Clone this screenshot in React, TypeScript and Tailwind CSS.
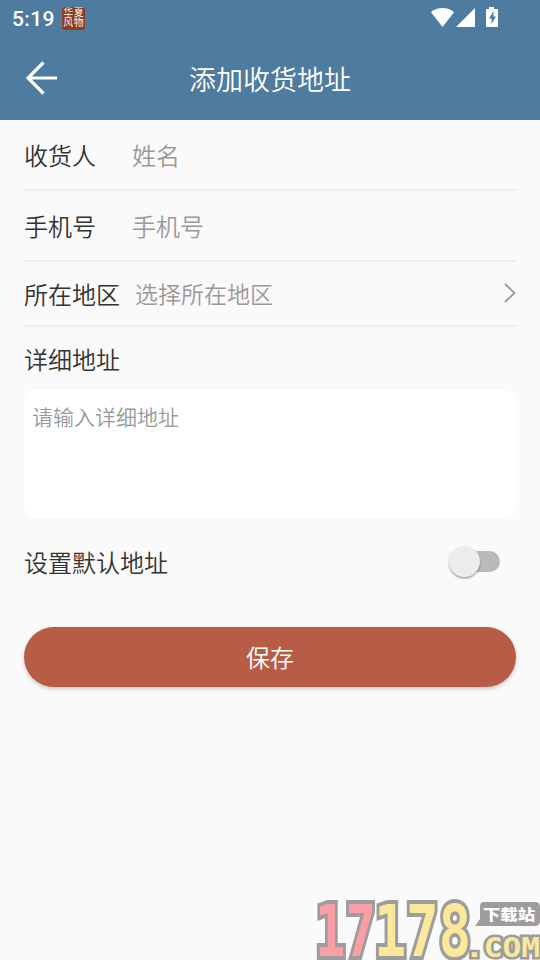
import React from 'react';

const FONT = "font-['Roboto','Noto_Sans_CJK_SC',sans-serif]";

function StatusBar() {
  return (
    <div className="flex h-9 items-center pl-3 pr-[42px]">
      <span className="mt-[2px] text-[21px] leading-none font-medium tracking-[0.4px]">5:19</span>
      <div className="ml-[7px] grid h-[23px] w-[23px] grid-cols-2 place-content-center place-items-center rounded-[3px] bg-[#8e3c1e] px-px text-[10px] leading-[10px]">
        <span>华</span>
        <span>夏</span>
        <span>风</span>
        <span>物</span>
      </div>
      <svg className="mb-[2px] ml-auto" width="67" height="22" viewBox="0 0 67 22" fill="#fff">
        <path d="M0 6.200C3.200 3.200 7.200 2 11.500 2S19.800 3.200 23 6.200L11.500 21Z" />
        <path d="M44 2V21H25Z" />
        <path
          fillRule="evenodd"
          d="M58 1h5v2h3q1 0 1 1V20q0 1-1 1H56q-1 0-1-1V4q0-1 1-1h2ZM62.500 5 58 12.500h2.500V18l4.500-7.500h-2.500Z"
        />
      </svg>
    </div>
  );
}

function Header() {
  return (
    <header className="h-[120px] bg-[#4e7ba0] text-white">
      <StatusBar />
      <div className="grid h-[84px] grid-cols-[60px_1fr_60px] items-center">
        <svg className="ml-[26px]" width="32" height="34" viewBox="0 0 32 34" fill="none" stroke="#fff" strokeWidth="3.200">
          <path d="M17.500 1.500 2 17l15.500 15.500M1.500 17H31" />
        </svg>
        <h1 className="pt-[5px] text-center text-[27px] leading-9 font-[350]">添加收货地址</h1>
      </div>
    </header>
  );
}

type FieldProps = {
  label: string;
  placeholder: string;
};

function Field({ label, placeholder }: FieldProps) {
  return (
    <div className="flex h-[71px] items-center border-b-2 border-[#efefef] pt-[5px]">
      <span className="w-[108px] text-2xl">{label}</span>
      <span className="text-2xl text-[#999]">{placeholder}</span>
    </div>
  );
}

function Watermark() {
  return (
    <svg
      className="absolute bottom-0 right-0 font-['DejaVu_Sans_Mono',monospace] font-bold"
      width="228"
      height="64"
      viewBox="312 896 228 64"
      stroke="#9d9d9d"
      paintOrder="stroke"
    >
      <g fontSize="72" strokeWidth="8">
        <text x="315" y="956" fill="#fc9ea6" textLength="61" lengthAdjust="spacingAndGlyphs">
          17
        </text>
        <text x="374" y="956" fill="#fbe89b" textLength="97" lengthAdjust="spacingAndGlyphs">
          178
        </text>
      </g>
      <text
        x="465"
        y="957"
        fontSize="27"
        fill="#fbe89b"
        strokeWidth="5"
        textLength="75"
        lengthAdjust="spacingAndGlyphs"
      >
        .COM
      </text>
      <path d="M484 902h51q5 0 5 5v14q0 5-5 5h-60l5-7v-12q0-5 4-5Z" fill="#9d9d9d" stroke="none" />
      <text
        className="font-['Noto_Sans_CJK_SC',sans-serif] font-black"
        x="483"
        y="920"
        fontSize="15"
        fill="#fff"
        stroke="none"
        textLength="52"
        lengthAdjust="spacingAndGlyphs"
      >
        下载站
      </text>
    </svg>
  );
}

export default function App() {
  return (
    <div className={`relative h-[960px] w-[540px] overflow-hidden bg-[#fafafa] font-[350] text-[#333] ${FONT}`}>
      <Header />

      <main className="px-6">
        <Field label="收货人" placeholder="姓名" />
        <Field label="手机号" placeholder="手机号" />

        <div className="flex h-[65px] items-center border-b-2 border-[#efefef]">
          <span className="w-[111px] pt-[5px] text-2xl">所在地区</span>
          <span className="pt-[5px] text-[23px] text-[#999]">选择所在地区</span>
          <svg className="mb-[2px] ml-auto" width="12" height="20" viewBox="0 0 12 20" fill="none" stroke="#999" strokeWidth="1.800">
            <path d="M1 1 10.500 10 1 19" />
          </svg>
        </div>

        <div className="flex h-[63px] items-center pt-[5px] text-2xl">详细地址</div>
        <div className="h-32 rounded-xl bg-white px-2 py-3 text-[21px] leading-8 text-[#999]">
          请输入详细地址
        </div>

        {/* Default address switch */}
        <div className="flex h-[88px] items-center justify-between pr-4">
          <span className="pt-[3px] text-2xl">设置默认地址</span>
          <div className="mb-px flex h-[21px] w-[51px] items-center">
            <div className="z-10 h-[31px] w-[31px] shrink-0 rounded-full bg-[#ececec] shadow-[0_1.500px_2px_rgba(0,0,0,0.35)]" />
            <div className="-ml-[15px] h-[21px] w-[35px] shrink-0 rounded-r-full bg-[#bababa]" />
          </div>
        </div>

        <button className="mt-[21px] block h-[60px] w-full rounded-full bg-[#b85d45] pt-[3px] text-2xl text-white shadow-[0_2px_4px_rgba(0,0,0,0.2)]">
          保存
        </button>
      </main>

      <Watermark />
    </div>
  );
}
